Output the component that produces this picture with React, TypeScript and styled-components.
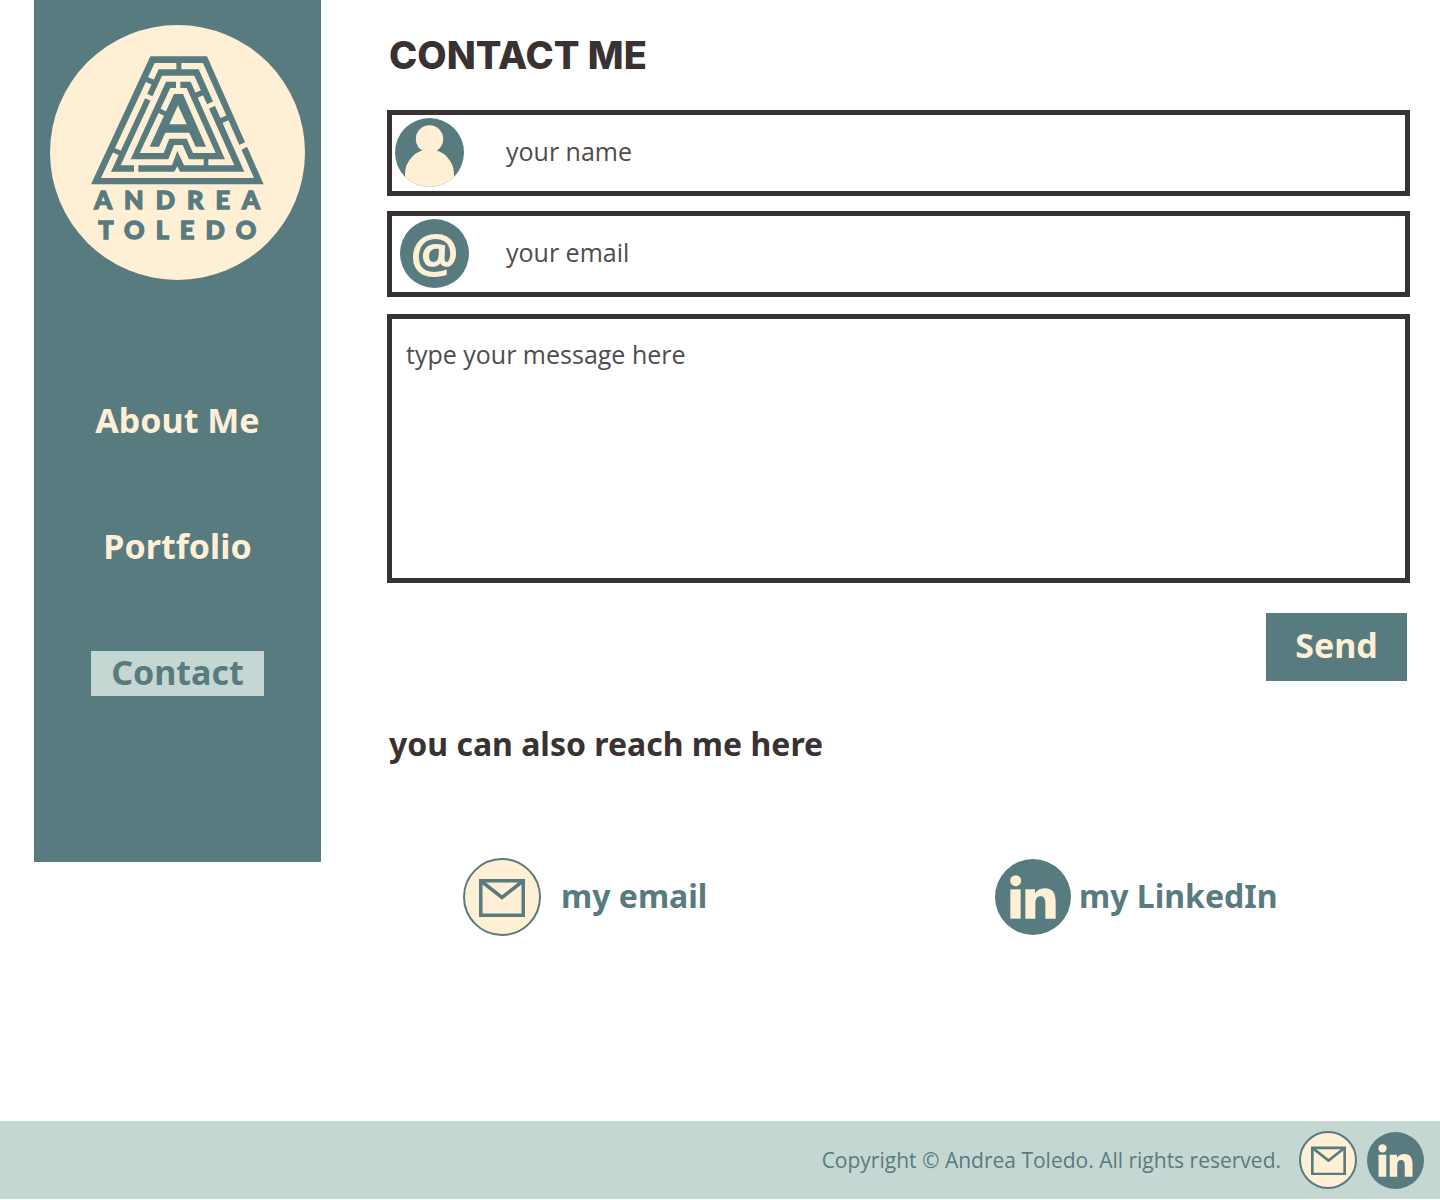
import React from "react";
import styled, { createGlobalStyle } from "styled-components";

const teal = "#587b7f";
const cream = "#ffefd5";
const mist = "#c5d7d3";
const ink = "#393233";
const sans = `"Noto Sans", "Open Sans", sans-serif`;
const light = `"Open Sans", "Noto Sans", sans-serif`;

const GlobalStyle = createGlobalStyle`
  *, *::before, *::after { box-sizing: border-box; }
  body { margin: 0; background: #fff; font-family: ${sans}; color: ${ink}; }
`;

const Page = styled.div`
  display: flex;
  flex-direction: column;
  min-height: 100vh;
  padding-bottom: 1px;
`;

const Columns = styled.div`
  flex: 1;
  display: grid;
  grid-template-columns: 287px minmax(0, 1fr);
  column-gap: 66px;
  align-items: start;
  padding: 0 30px 0 34px;
`;

const Sidebar = styled.aside`
  display: flex;
  flex-direction: column;
  align-items: center;
  gap: 119px;
  padding: 25px 16px 166px;
  background: ${teal};
`;

const LogoLink = styled.a`
  display: block;
  width: 255px;
  height: 255px;
  border-radius: 50%;

  svg { display: block; width: 100%; height: 100%; }
`;

const Nav = styled.nav`
  display: flex;
  flex-direction: column;
  gap: 81px;
`;

const NavLink = styled.a<{ $active?: boolean }>`
  width: 173px;
  padding-bottom: 2px;
  background: ${(p) => (p.$active ? mist : "transparent")};
  color: ${(p) => (p.$active ? teal : cream)};
  font-size: 34px;
  font-weight: 700;
  line-height: 43px;
  text-align: center;
  text-decoration: none;
  white-space: nowrap;
`;

const Main = styled.main`
  padding-top: 31px;
`;

const Title = styled.h1`
  margin: 0 0 31px 2px;
  font-family: Inter, sans-serif;
  font-size: 38px;
  font-weight: 800;
  line-height: 48px;
`;

const Form = styled.form`
  display: flex;
  flex-direction: column;
  gap: 15px;
`;

const Field = styled.label<{ $inset: number }>`
  display: grid;
  grid-template-columns: 114px minmax(0, 1fr);
  align-items: center;
  height: 86px;
  border: 5px solid ${ink};
  padding-bottom: 1px;

  & > :first-child { margin-left: ${(p) => p.$inset}px; }
`;

const Input = styled.input`
  width: 100%;
  height: 70px;
  border: 0;
  padding: 0 0 4px;
  background: transparent;
  color: #4d4d4d;
  font: 25px/36px ${light};
  outline: none;

  &::placeholder { color: #4d4d4d; opacity: 1; }
`;

const Message = styled.textarea`
  display: block;
  width: 100%;
  height: 269px;
  border: 5px solid ${ink};
  border-radius: 0;
  margin-top: 2px;
  padding: 17px 14px;
  background: transparent;
  color: #4d4d4d;
  font: 25px/36px ${light};
  resize: none;
  outline: none;

  &::placeholder { color: #4d4d4d; opacity: 1; }
`;

const SendButton = styled.button`
  align-self: flex-end;
  width: 141px;
  height: 68px;
  margin: 15px 3px 0 0;
  border: 0;
  padding: 0 0 4px;
  background: ${teal};
  color: ${cream};
  font: 700 34px/45px ${sans};
  cursor: pointer;
`;

const Subtitle = styled.h2`
  margin: 40px 0 0 2px;
  font-size: 32px;
  font-weight: 700;
  line-height: 45px;
`;

const ContactGrid = styled.div`
  display: grid;
  grid-template-columns: 532px minmax(0, 1fr);
  padding: 92px 0 60px 76px;
`;

const ContactLink = styled.a<{ $gap: number }>`
  display: inline-flex;
  align-items: center;
  gap: ${(p) => p.$gap}px;
  color: ${teal};
  font-size: 32px;
  font-weight: 700;
  line-height: 45px;
  text-decoration: none;
  white-space: nowrap;
`;

const ContactLabel = styled.span`
  padding-bottom: 4px;
`;

const Disc = styled.span<{ $size: number; $light?: boolean }>`
  flex: none;
  display: flex;
  align-items: center;
  justify-content: center;
  width: ${(p) => p.$size}px;
  height: ${(p) => p.$size}px;
  border: ${(p) => (p.$light ? `2px solid ${teal}` : "0")};
  border-radius: 50%;
  background: ${(p) => (p.$light ? cream : teal)};
  color: ${(p) => (p.$light ? teal : cream)};

  svg { display: block; }
`;

const Portrait = styled.svg`
  border-radius: 50%;
`;

const AtSign = styled.span`
  padding-bottom: 4px;
  font-family: ${light};
  font-size: 54px;
  font-weight: 700;
  line-height: 64px;
`;

const Footer = styled.footer`
  display: flex;
  align-items: center;
  justify-content: flex-end;
  height: 78px;
  padding-right: 16px;
  background: ${mist};
  color: ${teal};
`;

const Copyright = styled.p`
  margin: 0 18px 0 0;
  font-family: ${light};
  font-size: 21px;
  line-height: 30px;
`;

const FooterLinks = styled.div`
  display: flex;
  align-items: center;
  gap: 10px;
`;

const IconLink = styled.a`
  display: block;
`;

function Logo() {
  return (
    <svg viewBox="30 30 765 765" role="img" aria-label="Andrea Toledo">
      <circle cx="412.5" cy="412.5" r="382.5" fill={cream} />
      <g fill={teal}>
        <path d="M331 124H501L671 508H153Z" />
        <path fill={cream} d="M344 144H489L642 489H183Z" />
        <path d="M356 163H476L613 470H420L412 454L403 470H213Z" />
        <path fill={cream} d="M366 182H463L583 451H432L412 408L396 451H242Z" />
        <path d="M378 200H452L555 433H447L428 390H402L385 433H272Z" />
        <path fill={cream} d="M391 219H440L527 414H459L440 371H388L371 414H299Z" />
        <path d="M402 237H429L498 395H467L448 353H376L357 395H329Z" />
        <path fill={cream} d="M414 271L440 328H388Z" />
        <path d="M409 140H424V167H409Z" />
        <path d="M320 185L347 196L338 210L312 199Z" />
        <path d="M221 398L247 409L240 422L214 410Z" />
        <path d="M536 311L561 301L569 314L545 325Z" />
        <path d="M461 235L487 224L496 238L470 250Z" />
        <path d="M491 430H505V454H491Z" />
        <path d="M358 280L382 291L375 304L351 292Z" />
      </g>
      <g fill={cream}>
        <path d="M408 196H421V222H408Z" />
        <path d="M320 236L342 246L335 259L313 248Z" />
        <path d="M498 269L520 259L528 271L505 282Z" />
        <path d="M282 448H295V474H282Z" />
        <path d="M591 393L616 381L624 394L600 407Z" />
      </g>
      <g fill={teal} stroke={teal} strokeWidth="4" fontFamily="Lato, sans-serif" fontWeight="900" fontSize="76">
        <text x="163" y="581" letterSpacing="36">ANDREA</text>
        <text x="175" y="671" letterSpacing="33">TOLEDO</text>
      </g>
    </svg>
  );
}

function PersonIcon() {
  return (
    <Portrait width="69" height="69" viewBox="0 0 69 69" fill={cream} aria-hidden="true">
      <circle cx="34.5" cy="21" r="13.7" />
      <path d="M10 56A24.5 24.5 0 0 1 59 56V69H10Z" />
    </Portrait>
  );
}

function Envelope({ width }: { width: number }) {
  return (
    <svg width={width} viewBox="0 -2 46 40" fill="none" stroke={teal} strokeWidth="3.5" aria-hidden="true">
      <path d="M1.75 1.75H44.25V36.25H1.75Z" />
      <path d="M2 2L23 18.5L44 2" />
    </svg>
  );
}

function LinkedInMark({ size }: { size: number }) {
  return (
    <svg width={size} height={size} viewBox="30 27 228 228" fill={cream} aria-hidden="true">
      <circle cx="92" cy="92" r="16.5" />
      <path d="M76 118H107V206H76Z" />
      <path d="M121 118H150V130C158 119 168 115 180 115C203 115 212 130 212 156V206H181V160C181 147 177 139 167 139C156 139 151 147 151 160V206H121Z" />
    </svg>
  );
}

export default function App() {
  return (
    <>
      <GlobalStyle />
      <Page>
        <Columns>
          <Sidebar>
            <LogoLink href="#home">
              <Logo />
            </LogoLink>
            <Nav>
              <NavLink href="#about">About Me</NavLink>
              <NavLink href="#portfolio">Portfolio</NavLink>
              <NavLink href="#contact" aria-current="page" $active>
                Contact
              </NavLink>
            </Nav>
          </Sidebar>
          <Main>
            <Title>CONTACT ME</Title>
            <Form onSubmit={(event) => event.preventDefault()}>
              <Field $inset={3}>
                <Disc $size={69}>
                  <PersonIcon />
                </Disc>
                <Input type="text" placeholder="your name" aria-label="your name" />
              </Field>
              <Field $inset={8}>
                <Disc $size={69}>
                  <AtSign aria-hidden="true">@</AtSign>
                </Disc>
                <Input type="email" placeholder="your email" aria-label="your email" />
              </Field>
              <Message placeholder="type your message here" aria-label="type your message here" />
              <SendButton type="submit">Send</SendButton>
            </Form>
            <Subtitle>you can also reach me here</Subtitle>
            <ContactGrid>
              <ContactLink href="#email" $gap={20}>
                <Disc $size={78} $light>
                  <Envelope width={46} />
                </Disc>
                <ContactLabel>my email</ContactLabel>
              </ContactLink>
              <ContactLink href="#linkedin" $gap={8}>
                <Disc $size={76}>
                  <LinkedInMark size={76} />
                </Disc>
                <ContactLabel>my LinkedIn</ContactLabel>
              </ContactLink>
            </ContactGrid>
          </Main>
        </Columns>
        <Footer>
          <Copyright>Copyright © Andrea Toledo. All rights reserved.</Copyright>
          <FooterLinks>
            <IconLink href="#email" aria-label="Email">
              <Disc $size={58} $light>
                <Envelope width={35} />
              </Disc>
            </IconLink>
            <IconLink href="#linkedin" aria-label="LinkedIn">
              <Disc $size={57}>
                <LinkedInMark size={57} />
              </Disc>
            </IconLink>
          </FooterLinks>
        </Footer>
      </Page>
    </>
  );
}
